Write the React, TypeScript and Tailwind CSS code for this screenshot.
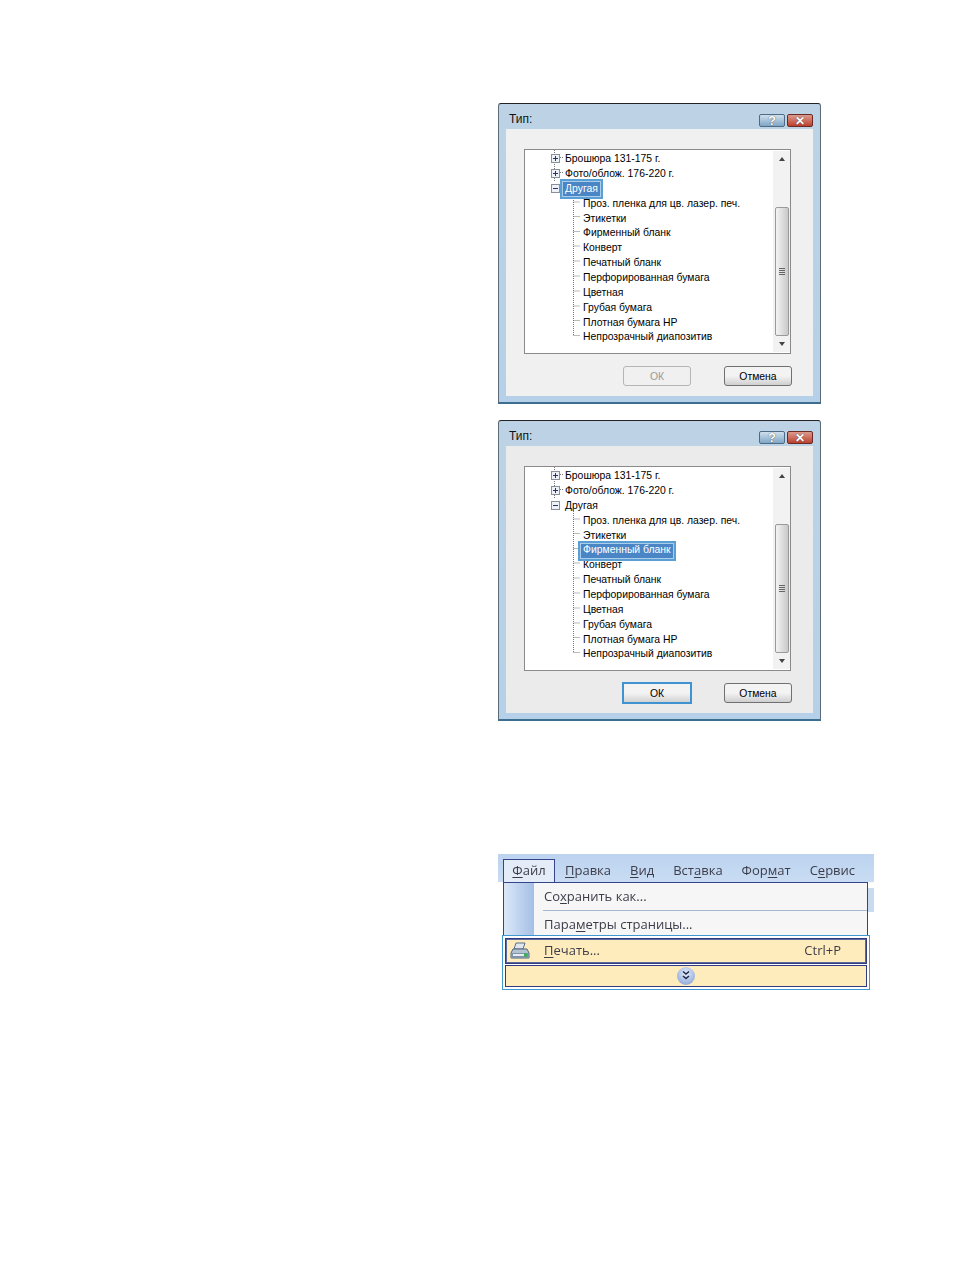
const rows = [
  { label: "Брошюра 131-175 г.", kind: "plus" },
  { label: "Фото/облож. 176-220 г.", kind: "plus" },
  { label: "Другая", kind: "minus" },
  { label: "Проз. пленка для цв. лазер. печ.", kind: "child" },
  { label: "Этикетки", kind: "child" },
  { label: "Фирменный бланк", kind: "child" },
  { label: "Конверт", kind: "child" },
  { label: "Печатный бланк", kind: "child" },
  { label: "Перфорированная бумага", kind: "child" },
  { label: "Цветная", kind: "child" },
  { label: "Грубая бумага", kind: "child" },
  { label: "Плотная бумага HP", kind: "child" },
  { label: "Непрозрачный диапозитив", kind: "child" },
];

const TreeLines = () => (
  <svg className="absolute left-0 top-0" width="70" height="202" fill="none" stroke="#777" strokeDasharray="1 1">
    <path d="M29.5 0V32M33 7.5H38M33 22.5H38" />
    <path d="M48.5 44V186M48.5 52H55M48.5 66.5H55M48.5 81.5H55M48.5 96H55M48.5 111H55M48.5 126H55M48.5 141H55M48.5 156H55M48.5 170.5H55M48.5 185.5H55" />
  </svg>
);

const Expander = ({ open }: { open: boolean }) => (
  <svg width="9" height="9" className="absolute left-[25px] top-[2px] bg-white">
    <rect x="0.5" y="0.5" width="8" height="8" fill="#eef1f5" stroke="#8a9099" />
    <path d={open ? "M2 4.5H7" : "M2 4.5H7M4.5 2V7"} stroke="#20356f" />
  </svg>
);

const TreeRow = ({ label, kind, selected }: { label: string; kind: string; selected: boolean }) => (
  <div className={`relative flex h-[14.85px] items-center ${kind === "child" ? "pl-[57px]" : "pl-[39px]"}`}>
    {kind !== "child" && <Expander open={kind === "minus"} />}
    <span
      className={
        selected
          ? "relative z-10 -ml-[5px] flex h-[20px] shrink-0 items-center whitespace-nowrap border-2 border-[#5a9fd4] bg-[#4a86c5] px-[3px] text-white outline outline-1 -outline-offset-[3px] outline-[#a9cdea]"
          : "whitespace-nowrap"
      }
    >
      {label}
    </span>
  </div>
);

const Scrollbar = () => (
  <div className="flex w-[17px] flex-col items-center bg-[#f2f2f2]">
    <div className="mt-[6px] h-0 w-0 border-x-[3px] border-b-[4px] border-x-transparent border-b-[#444]" />
    <div className="mt-[46px] flex h-[129px] w-[14px] flex-col items-center justify-center gap-[1px] rounded-[2px] border border-[#9a9a9a] bg-gradient-to-r from-[#f4f4f4] to-[#c9c9c9]">
      <div className="h-px w-[6px] bg-[#666]" />
      <div className="h-px w-[6px] bg-[#666]" />
      <div className="h-px w-[6px] bg-[#666]" />
      <div className="h-px w-[6px] bg-[#666]" />
    </div>
    <div className="mt-[6px] h-0 w-0 border-x-[3px] border-t-[4px] border-x-transparent border-t-[#444]" />
  </div>
);

const DialogButton = ({ label, disabled, focused }: { label: string; disabled?: boolean; focused?: boolean }) => (
  <div
    className={`flex h-[20px] w-[68px] items-center justify-center pt-px text-[10.4px] ${
      disabled
        ? "rounded-[3px] border border-[#b5b5b5] bg-[#f0f0f0] text-[#9a9a9a]"
        : focused
          ? "bg-gradient-to-b from-[#f3f3f3] from-50% to-[#cfcfcf] text-black outline-2 -outline-offset-1 outline-[#3f93d0]"
          : "rounded-[3px] border border-[#707070] bg-gradient-to-b from-[#f3f3f3] from-50% to-[#cfcfcf] text-black"
    }`}
  >
    {label}
  </div>
);

const TypeDialog = ({ selected, okEnabled }: { selected: string; okEnabled: boolean }) => (
  <div
    className="flex h-[301px] w-[323px] flex-col rounded-t-[3px] border border-b-2 border-[#5b6b78] border-t-[#222] border-b-[#3c6e8f] bg-gradient-to-b from-[#bdd3e5] to-[#b5d0e8]"
    style={{ fontFamily: '"Liberation Sans", sans-serif' }}
  >
    <div className="flex h-[25px] items-end justify-between pb-[2px] pl-[10px] pr-[7px]">
      <span className="text-[12px] leading-[16px] text-[#111]">Тип:</span>
      <div className="flex gap-[2px]">
        <div className="flex h-[13px] w-[26px] items-center justify-center rounded-[2px] border border-[#4d6b85] bg-gradient-to-b from-[#cfe0ee] to-[#7fa6c6] text-[13px] font-bold leading-none text-white [text-shadow:0_0_1px_#222]">?</div>
        <div className="flex h-[13px] w-[26px] items-center justify-center rounded-[2px] border border-[#6b2b25] bg-gradient-to-b from-[#dc9a8e] to-[#bb3f2e] text-[12px] font-bold leading-none text-white [text-shadow:0_0_1px_#333]">✕</div>
      </div>
    </div>
    <div className={`mx-[7px] mb-[6px] flex-1 pl-[18px] pt-[20px] ${okEnabled ? "bg-[#ebebeb]" : "bg-[#f0f0f0]"}`}>
      <div className="relative flex h-[205px] w-[267px] border border-[#8a8a8a] bg-white p-px pr-0">
        <TreeLines />
        <div className="relative flex-1 pt-px text-[10.4px] leading-none text-black">
          {rows.map((row) => (
            <TreeRow key={row.label} label={row.label} kind={row.kind} selected={row.label === selected} />
          ))}
        </div>
        <Scrollbar />
      </div>
      <div className="ml-[99px] mt-[12px] flex gap-[33px]">
        <DialogButton label="ОК" disabled={!okEnabled} focused={okEnabled} />
        <DialogButton label="Отмена" />
      </div>
    </div>
  </div>
);

const U = ({ children }: { children: string }) => <u className="underline-offset-2">{children}</u>;

const PrinterIcon = () => (
  <svg width="20" height="18" viewBox="0 0 20 18">
    <path d="M6 1H15L13 7H4Z" fill="#dfe6ee" stroke="#5c6f86" />
    <path d="M3 7H17L19 11V16H1V11Z" fill="#b4c2d2" stroke="#52657c" />
    <path d="M1 11H19V16H1Z" fill="#7f93aa" />
    <rect x="3" y="12" width="14" height="2" fill="#e8edf2" />
    <rect x="14" y="11.5" width="3" height="3" fill="#37b24d" />
  </svg>
);

const ChevronBadge = () => (
  <svg width="18" height="18" viewBox="0 0 18 18">
    <defs>
      <radialGradient id="badge" cx="50%" cy="35%" r="65%">
        <stop offset="0" stopColor="#e6eefa" />
        <stop offset="1" stopColor="#8fa9da" />
      </radialGradient>
    </defs>
    <circle cx="9" cy="9" r="9" fill="url(#badge)" />
    <path d="M6 4.5L9 7L12 4.5M6 9L9 11.5L12 9" fill="none" stroke="#1f2a4d" strokeWidth="1.6" />
  </svg>
);

const MenuCrop = () => (
  <div
    className="flex h-[136px] w-[376px] flex-col bg-white text-[13px] text-[#3d3d4a]"
    style={{ fontFamily: '"Open Sans", "Liberation Sans", sans-serif' }}
  >
    <div className="flex h-[28px] items-end bg-gradient-to-b from-[#bcd3ef] to-[#c9dcf3] pl-[5px] [&>span]:blur-[0.3px]">
      <span className="relative z-10 flex h-[23px] w-[52px] items-center justify-center border border-b-0 border-[#33468a] bg-[#e3ecf7]">
        <U>Ф</U>айл
      </span>
      <span className="ml-[10px] flex h-[22px] items-center"><U>П</U>равка</span>
      <span className="ml-[19px] flex h-[22px] items-center"><U>В</U>ид</span>
      <span className="ml-[19px] flex h-[22px] items-center">Вст<U>а</U>вка</span>
      <span className="ml-[19px] flex h-[22px] items-center">Фор<U>м</U>ат</span>
      <span className="ml-[19px] flex h-[22px] items-center">С<U>е</U>рвис</span>
    </div>
    <div className="relative flex flex-1">
      <div className="w-[5px]" />
      <div className="flex h-[60px] w-[365px] border-x border-t border-[#33468a] bg-[#f6f6f6]">
        <div className="w-[30px] bg-gradient-to-r from-[#dce8f7] to-[#a4bfe6]" />
        <div className="flex-1 pl-[9px] blur-[0.3px]">
          <div className="flex h-[28px] items-center border-b border-[#a7b9cf] pl-px"><span>Со<U>х</U>ранить как...</span></div>
          <div className="flex h-[28px] items-center pl-px"><span>Пара<U>м</U>етры страницы...</span></div>
        </div>
      </div>
      <div className="mt-[6px] h-[24px] w-[6px] bg-[#c9dbf1]" />
      <div className="absolute left-[4px] top-[53px] flex h-[55px] w-[368px] flex-col gap-px border border-[#3f98d0] bg-white p-[2px]">
        <div className="flex h-[26px] items-center border border-[#2f3a80] bg-[#ffecbc] pl-[4px] pr-[25px] shadow-[0_0_0_1px_#5a6aa0_inset]">
          <PrinterIcon />
          <span className="ml-[14px] flex-1 blur-[0.3px]"><U>П</U>ечать...</span>
          <span className="blur-[0.3px]">Ctrl+P</span>
        </div>
        <div className="flex flex-1 items-center justify-center border border-[#2f3a80] bg-[#ffecbc]">
          <ChevronBadge />
        </div>
      </div>
    </div>
  </div>
);

export default function App() {
  return (
    <div className="h-[1270px] bg-white pl-[498px] pt-[103px]">
      <div className="flex flex-col gap-[16px]">
        <TypeDialog selected="Другая" okEnabled={false} />
        <TypeDialog selected="Фирменный бланк" okEnabled={true} />
      </div>
      <div className="mt-[133px]">
        <MenuCrop />
      </div>
    </div>
  );
}
